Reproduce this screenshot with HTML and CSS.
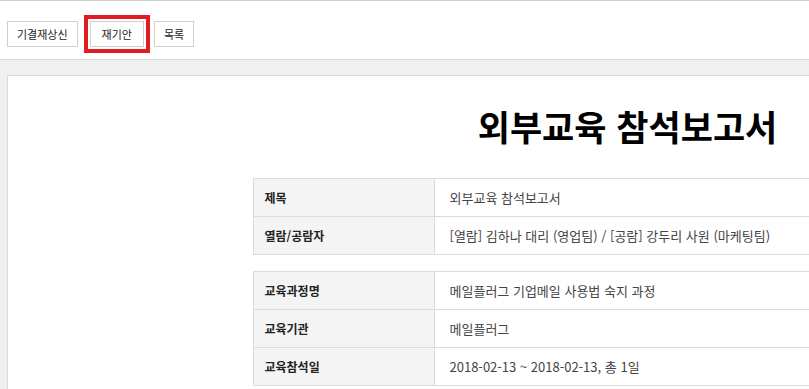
FILE: index.html
```html
<!DOCTYPE html>
<html lang="ko">
<head>
    <meta charset="UTF-8">
    <meta name="viewport" content="width=device-width, initial-scale=1.0">
    <title>외부교육 참석보고서</title>
    <link rel="stylesheet" href="styles.css">
</head>
<body>
    <div class="toolbar">
        <button class="btn">기결재상신</button>
        <button class="btn is-marked">재기안</button>
        <button class="btn">목록</button>
    </div>

    <div class="content">
        <div class="panel">
            <div class="doc">
                <h1 class="doc-title">외부교육 참석보고서</h1>

                <table class="info-table">
                    <tr>
                        <th>제목</th>
                        <td>외부교육 참석보고서</td>
                    </tr>
                    <tr>
                        <th>열람/공람자</th>
                        <td>[열람] 김하나 대리 (영업팀) / [공람] 강두리 사원 (마케팅팀)</td>
                    </tr>
                </table>

                <table class="info-table">
                    <tr>
                        <th>교육과정명</th>
                        <td>메일플러그 기업메일 사용법 숙지 과정</td>
                    </tr>
                    <tr>
                        <th>교육기관</th>
                        <td>메일플러그</td>
                    </tr>
                    <tr>
                        <th>교육참석일</th>
                        <td>2018-02-13 ~ 2018-02-13, 총 1일</td>
                    </tr>
                </table>
            </div>
        </div>
    </div>
</body>
</html>
```

FILE: styles.css
```css
:root {
    --line-color: #dcdcdc;
    --band-color: #eff0f2;
    --label-bg: #f4f4f4;
    --text-color: #333;
    --mark-color: #e31b23;
    --font-main: 'Malgun Gothic', 'Noto Sans CJK KR', sans-serif;
}

* {
    margin: 0;
    padding: 0;
    box-sizing: border-box;
}

body {
    width: 809px;
    height: 389px;
    overflow: hidden;
    background: #fff;
    color: var(--text-color);
    font-family: var(--font-main);
    border-top: 1px solid #cfcfcf;
}

.toolbar {
    display: flex;
    align-items: center;
    gap: 6px;
    height: 58px;
    padding: 20px 7px 12px;
}

.btn {
    height: 26px;
    padding: 0 9px;
    background: #fff;
    border: 1px solid #cfcfcf;
    border-radius: 0;
    color: #222;
    font-family: var(--font-main);
    font-size: 11px;
    line-height: 24px;
    cursor: pointer;
}

/* highlighted button (red frame) */
.is-marked {
    margin: 0 4px 0 6px;
    padding: 0 11px;
    outline: 4px solid var(--mark-color);
    outline-offset: 2px;
}

.content {
    width: 100%;
    height: 340px;
    overflow: hidden;
    padding: 15px 0 0 7px;
    background: var(--band-color);
    border-top: 1px solid var(--line-color);
}

.panel {
    width: 1240px;
    height: 100%;
    padding-top: 30px;
    background: #fff;
    border-top: 1px solid var(--line-color);
    border-left: 1px solid var(--line-color);
}

.doc {
    width: 750px;
    margin: 0 auto;
    display: flex;
    flex-direction: column;
    gap: 16px;
}

.doc-title {
    font-size: 35px;
    font-weight: 700;
    line-height: 40px;
    color: #000;
    text-align: center;
    margin-bottom: 16px;
}

.info-table {
    width: 100%;
    border-collapse: collapse;
    font-size: 12px;
}

.info-table th,
.info-table td {
    height: 38px;
    border: 1px solid var(--line-color);
    text-align: left;
    vertical-align: middle;
}

.info-table th {
    width: 181px;
    padding-left: 11px;
    background: var(--label-bg);
    font-weight: 700;
    color: #222;
}

.info-table td {
    padding-left: 15px;
    font-size: 13px;
    color: #444;
}
```
